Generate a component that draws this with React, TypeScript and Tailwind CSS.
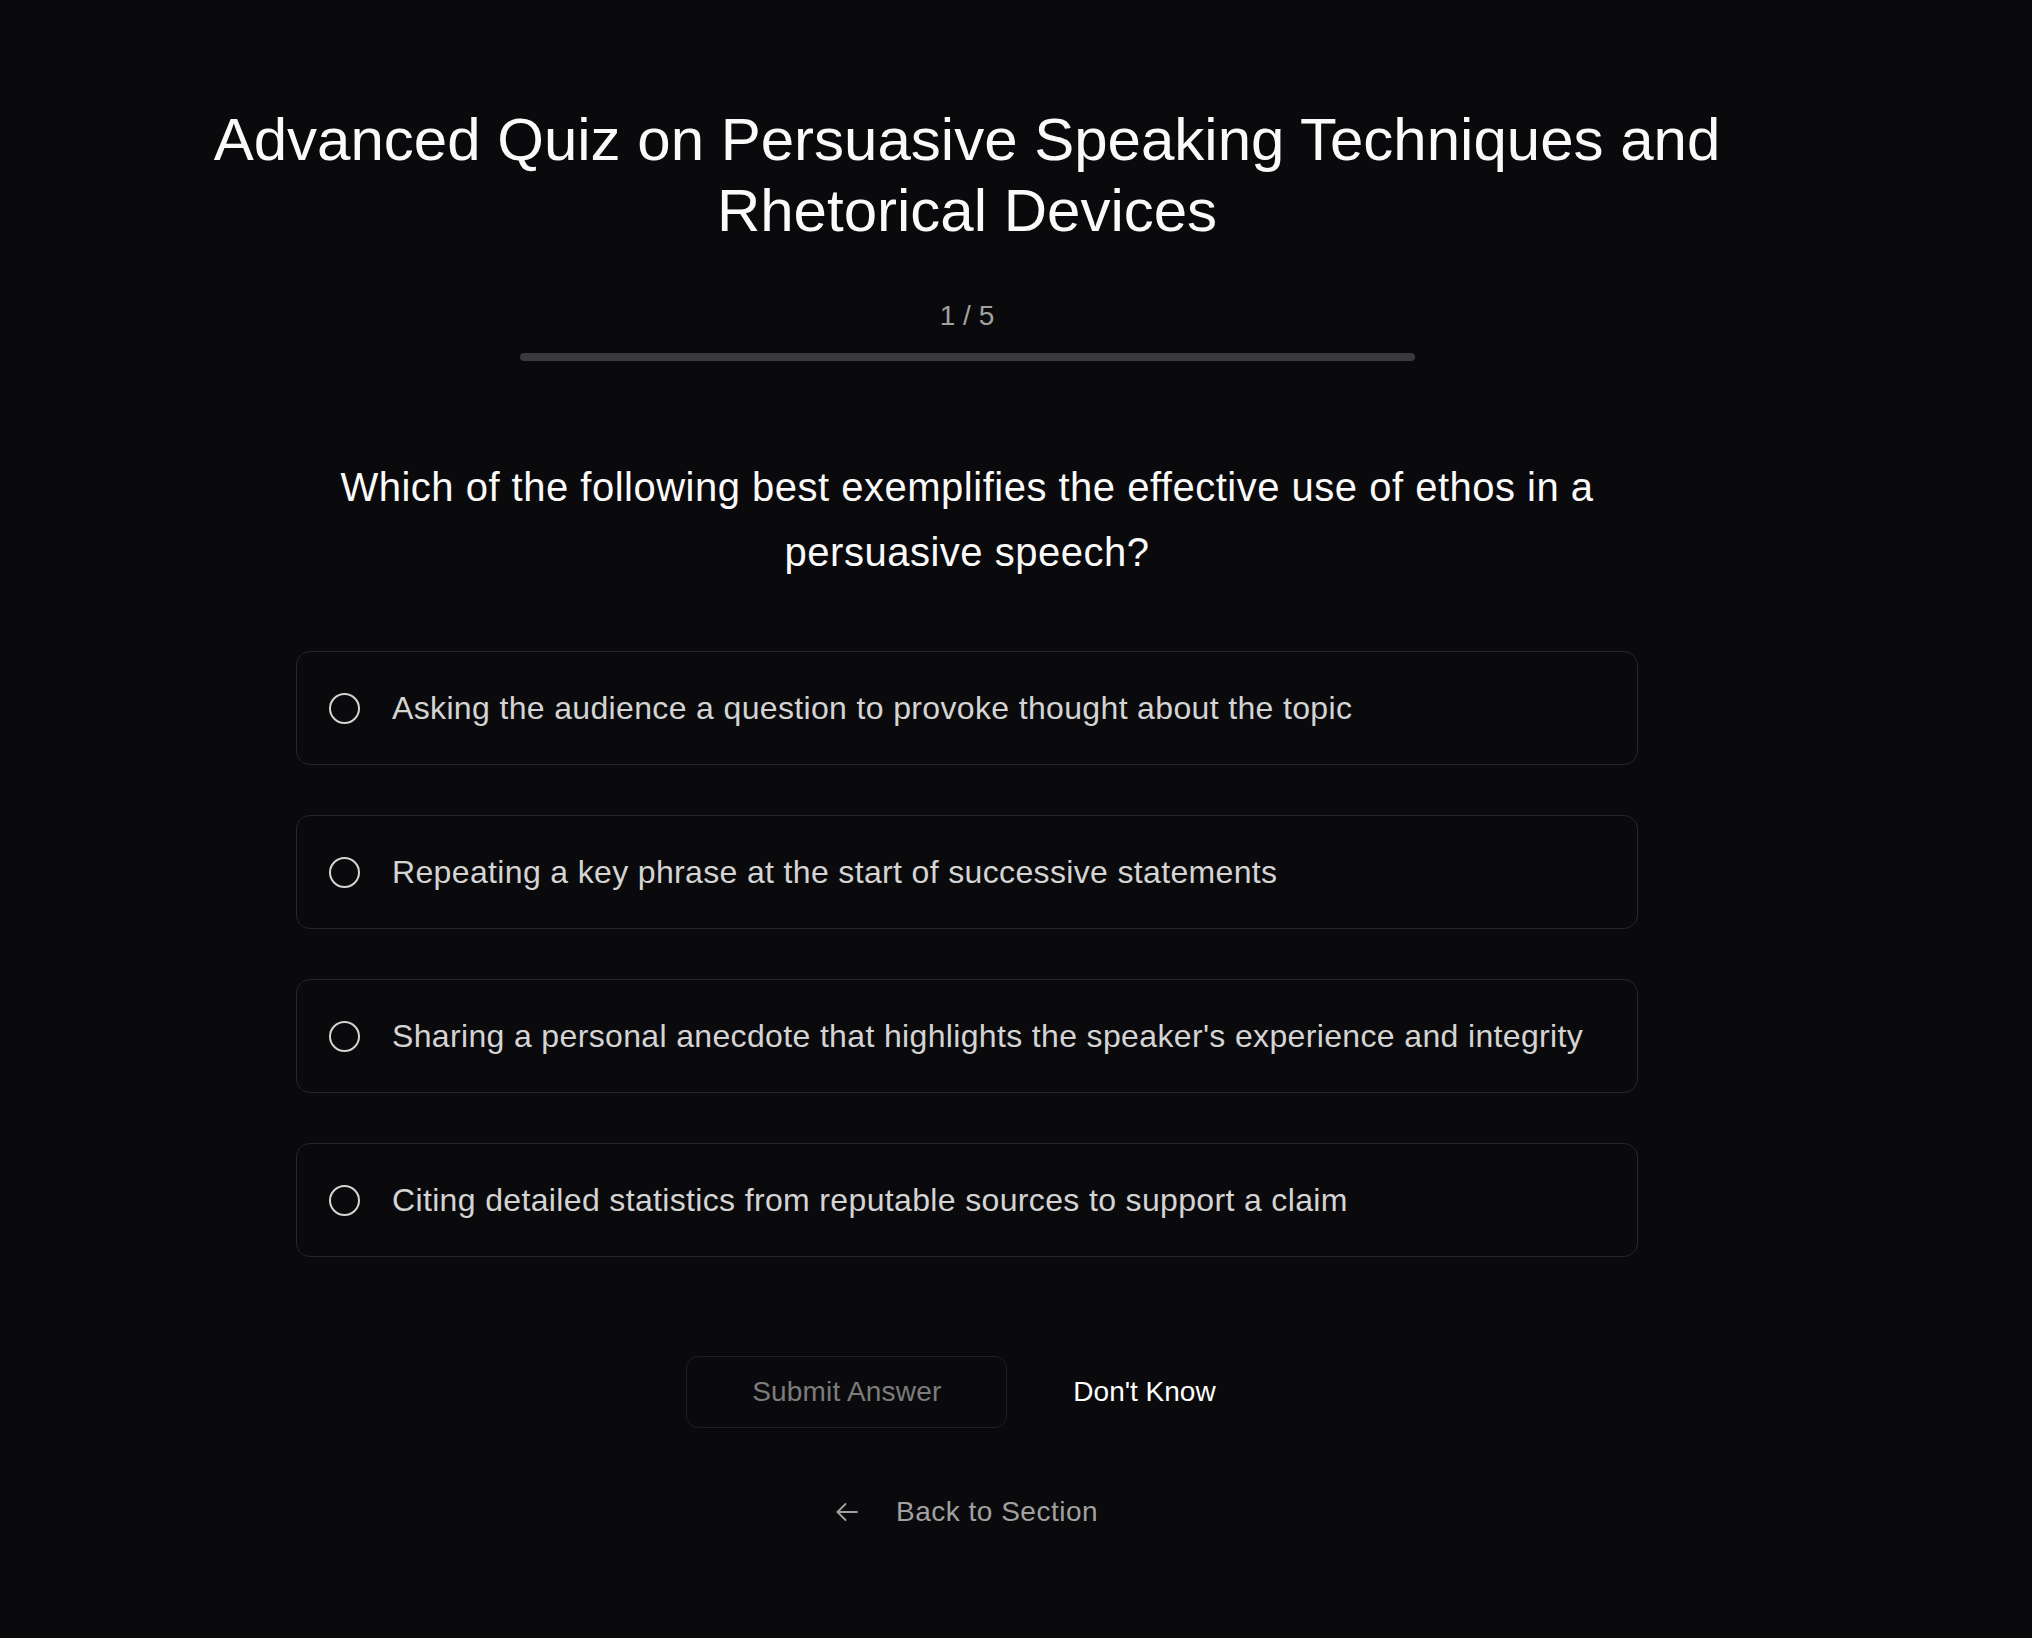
const options = [
  'Asking the audience a question to provoke thought about the topic',
  'Repeating a key phrase at the start of successive statements',
  "Sharing a personal anecdote that highlights the speaker's experience and integrity",
  'Citing detailed statistics from reputable sources to support a claim',
];

function BackArrow() {
  return (
    <svg width="22" height="18" viewBox="0 0 22 18" fill="none" stroke="currentColor" strokeWidth="1.8" strokeLinecap="round" strokeLinejoin="round">
      <path d="M21 9H1.5" />
      <path d="M9.5 1 1.5 9l8 8" />
    </svg>
  );
}

function Option({ label }: { label: string }) {
  return (
    <button className="flex h-[114px] w-full items-center gap-8 rounded-[14px] border border-[#27272a] px-8 text-left">
      <span className="h-[31px] w-[31px] shrink-0 rounded-full border-2 border-[#d4d4d4]" />
      <span className="text-[32px] leading-[48px] tracking-[0.35px] text-[#d4d4d4]">{label}</span>
    </button>
  );
}

export default function App() {
  return (
    <div className="min-h-screen bg-[#0a0a0c] font-['Liberation_Sans',Arial,sans-serif]">
      <div className="flex flex-col items-center pr-[98px] pt-[104px] pb-24">
        <h1 className="max-w-[1600px] text-center text-[60px] leading-[71px] text-[#fafafa]">
          Advanced Quiz on Persuasive Speaking Techniques and Rhetorical Devices
        </h1>

        <div className="mt-[49px] text-[28px] leading-[42px] text-[#a1a1a1]">1 / 5</div>
        <div className="mt-4 h-2 w-[895px] rounded-full bg-[#3a3a3c]" />

        <div className="mt-[94px] w-[1342px]">
          <p className="text-center text-[40px] leading-[65px] tracking-[0.5px] text-[#fafafa]">
            Which of the following best exemplifies the effective use of ethos in a persuasive speech?
          </p>

          <div className="mt-[66px] flex flex-col gap-[50px]">
            {options.map((o) => (
              <Option key={o} label={o} />
            ))}
          </div>
        </div>

        <div className="mt-[99px] flex items-center gap-[34px]">
          <button className="h-[72px] w-[321px] rounded-xl border border-[#1f1f22] text-[28px] tracking-[0.2px] text-[#7c7c7c]">
            Submit Answer
          </button>
          <button className="h-[72px] px-8 text-[28px] text-white">Don't Know</button>
        </div>

        <a className="mt-16 flex items-center gap-[38px] text-[28px] leading-[40px] text-[#a1a1a1]">
          <BackArrow />
          <span className="tracking-[0.5px]">Back to Section</span>
        </a>
      </div>
    </div>
  );
}
